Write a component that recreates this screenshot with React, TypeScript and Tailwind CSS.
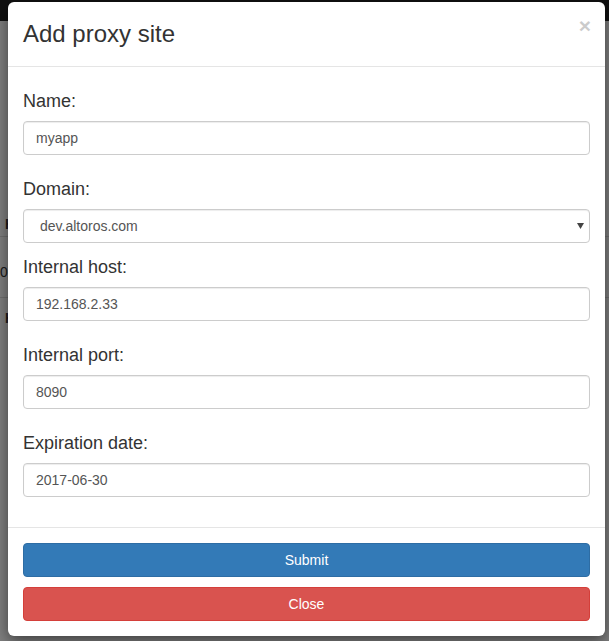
import React from "react"

const fields = [
  { label: "Name:", value: "myapp" },
  { label: "Domain:", value: "dev.altoros.com", select: true },
  { label: "Internal host:", value: "192.168.2.33" },
  { label: "Internal port:", value: "8090" },
  { label: "Expiration date:", value: "2017-06-30" },
]

function Field({ label, value, select }: { label: string; value: string; select?: boolean }) {
  return (
    <div className={select ? "mb-[11px]" : "mb-[21px] last:mb-0"}>
      <label className="block text-[18px] leading-[26px] mb-[7px] text-[#333]">{label}</label>
      {select ? (
        <div className="relative">
          <select
            defaultValue={value}
            className="block w-full h-[34px] appearance-none rounded-[4px] border border-[#ccc] bg-white pl-[16px] text-[14px] text-[#555] shadow-[inset_0_1px_1px_rgba(0,0,0,0.075)] outline-none"
            style={{ fontFamily: "'Liberation Sans', Arial, sans-serif" }}
          >
            <option>{value}</option>
          </select>
          <svg className="absolute right-[6px] top-[14px]" width="7" height="6" viewBox="0 0 7 6">
            <path d="M0 0h7L3.5 6z" fill="#444" />
          </svg>
        </div>
      ) : (
        <input
          defaultValue={value}
          className="block w-full h-[34px] rounded-[4px] border border-[#ccc] bg-white px-[12px] text-[14px] text-[#555] shadow-[inset_0_1px_1px_rgba(0,0,0,0.075)] outline-none"
          style={{ fontFamily: "'Liberation Sans', Arial, sans-serif" }}
        />
      )}
    </div>
  )
}

export default function App() {
  return (
    <div className="relative h-[641px] w-[609px] overflow-hidden bg-white font-['Liberation_Sans',Arial,sans-serif]">
      {/* page behind the modal */}
      <div className="h-[21px] bg-[#222]" />
      <div className="pt-[195px] text-[14px] leading-[16px] text-[#333]">
        <div className="h-[21px] border-b border-[#ddd] pl-[5px] font-bold">H</div>
        <div className="h-[61px] border-b border-[#ddd] pt-[27px]">0.</div>
        <div className="pl-[5px] pt-[12px] font-bold">H</div>
      </div>

      {/* backdrop + modal */}
      <div className="absolute inset-0 bg-black/50">
        <div className="ml-[8px] mt-[2px] flex w-[597px] flex-col rounded-[6px] bg-white shadow-[0_5px_15px_rgba(0,0,0,0.5)]">
          <div className="flex items-start justify-between border-b border-[#e5e5e5] p-[15px]">
            <h4 className="text-[24px] leading-[34px] text-[#333]">Add proxy site</h4>
            <span className="mt-[-2px] mr-[-1px] text-[21px] font-bold leading-[21px] text-black opacity-20">×</span>
          </div>
          <div className="px-[15px] pt-[21px] pb-[30px]">
            {fields.map((f) => (
              <Field key={f.label} {...f} />
            ))}
          </div>
          <div className="flex flex-col gap-[10px] border-t border-[#e5e5e5] p-[15px]">
            <button className="h-[34px] rounded-[4px] border border-[#2e6da4] bg-[#337ab7] text-[14px] text-white">
              Submit
            </button>
            <button className="h-[34px] rounded-[4px] border border-[#d43f3a] bg-[#d9534f] text-[14px] text-white">
              Close
            </button>
          </div>
        </div>
      </div>
    </div>
  )
}
